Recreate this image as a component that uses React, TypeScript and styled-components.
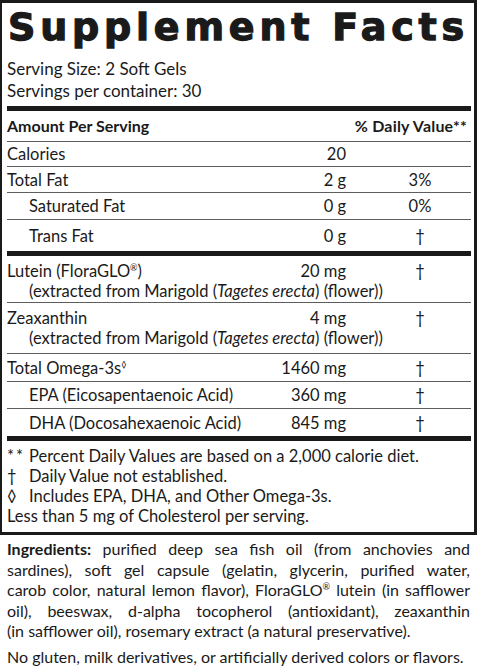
import React from "react";
import styled, { createGlobalStyle } from "styled-components";

const GlobalStyle = createGlobalStyle`
  *, *::before, *::after { box-sizing: border-box; }
  html, body { margin: 0; padding: 0; background: #fff; }
  body { font-family: "Lato", "DejaVu Sans", sans-serif; color: #1a1a1a; }
`;

const Page = styled.div`
  width: 477px;
  height: 672px;
  background: #fff;
  overflow: hidden;
`;

const Panel = styled.section`
  border: 3px solid #1a1a1a;
  border-left-width: 2px;
  padding: 0 3px 3px 5px;
`;

const Title = styled.h1`
  margin: 0;
  height: 55px;
  padding-left: 1px;
  font-family: "DejaVu Sans", sans-serif;
  font-weight: 700;
  font-size: 38px;
  line-height: 48px;
  letter-spacing: 4.8px;
  color: #1a1a1a;
  -webkit-text-stroke: 1.3px #1a1a1a;
  white-space: nowrap;
`;

const Serving = styled.div`
  font-size: 17px;
  line-height: 22px;
`;

const Rule = styled.div<{ $h: number; $gap?: number }>`
  height: ${(p) => p.$h}px;
  margin-top: ${(p) => p.$gap ?? 0}px;
  background: #1a1a1a;
`;

const Row = styled.div<{ $h: number; $last?: boolean; $top?: number }>`
  display: grid;
  grid-template-columns: 239px 100px 124px;
  align-content: ${(p) => (p.$top !== undefined ? "start" : "center")};
  padding-top: ${(p) => p.$top ?? 0}px;
  height: ${(p) => p.$h}px;
  border-bottom: ${(p) => (p.$last ? "none" : "1px solid #5e5e5e")};
  font-size: 16.5px;
  line-height: 20px;
`;

const HeadRow = styled(Row)`
  grid-template-columns: 1fr auto;
  font-weight: 700;
  font-size: 16px;
`;

const Name = styled.div<{ $indent?: boolean }>`
  padding-left: ${(p) => (p.$indent ? 22 : 0)}px;
  white-space: nowrap;
`;

const Amt = styled.div`
  text-align: right;
  white-space: nowrap;
`;

const DV = styled.div`
  padding-left: 24px;
  text-align: center;
`;

const Sub = styled.div`
  grid-column: 1 / -1;
  padding-left: 22px;
  white-space: nowrap;
`;

const Right = styled.div`
  text-align: right;
  padding-right: 4px;
  letter-spacing: 0.2px;
`;

const Mark = styled.sup`
  font-size: 9px;
  line-height: 0;
`;

const Notes = styled.div`
  padding-top: 5px;
  height: 88px;
  font-size: 16.5px;
  line-height: 20px;
`;

const Note = styled.div`
  display: grid;
  grid-template-columns: 22px 1fr;
`;

const Stars = styled.span`
  letter-spacing: 2px;
`;

const Ingredients = styled.div`
  padding: 4px 7px 0 7px;
  font-size: 16px;
  line-height: 20.5px;
  b { font-weight: 700; }
`;

const Line = styled.span<{ $last?: boolean }>`
  display: block;
  text-align: ${(p) => (p.$last ? "left" : "justify")};
  text-align-last: ${(p) => (p.$last ? "left" : "justify")};
  white-space: nowrap;
`;

const Free = styled.p`
  margin: 0;
  padding: 4px 7px 0 7px;
  font-size: 16px;
  line-height: 21px;
  white-space: nowrap;
`;

type Item = { name: React.ReactNode; amt: string; dv: string; indent?: boolean; h: number; last?: boolean };

const upper: Item[] = [
  { name: "Calories", amt: "20", dv: "", h: 25 },
  { name: "Total Fat", amt: "2 g", dv: "3%", h: 26 },
  { name: "Saturated Fat", amt: "0 g", dv: "0%", indent: true, h: 27 },
  { name: "Trans Fat", amt: "0 g", dv: "†", indent: true, h: 31, last: true },
];

const marigold = (
  <>
    (extracted from Marigold (<i>Tagetes erecta</i>) (flower))
  </>
);

export default function App() {
  return (
    <Page>
      <GlobalStyle />
      <Panel>
        <Title>Supplement Facts</Title>
        <Serving>Serving Size: 2 Soft Gels</Serving>
        <Serving>Servings per container: 30</Serving>
        <Rule $h={5} $gap={4} />
        <HeadRow $h={31}>
          <Name>Amount Per Serving</Name>
          <Right>% Daily Value**</Right>
        </HeadRow>
        {upper.map((r, i) => (
          <Row key={i} $h={r.h} $last={r.last}>
            <Name $indent={r.indent}>{r.name}</Name>
            <Amt>{r.amt}</Amt>
            <DV>{r.dv}</DV>
          </Row>
        ))}
        <Rule $h={5} />
        <Row $h={47} $top={5}>
          <Name>
            Lutein (FloraGLO<Mark>®</Mark>)
          </Name>
          <Amt>20 mg</Amt>
          <DV>†</DV>
          <Sub>{marigold}</Sub>
        </Row>
        <Row $h={51} $top={5}>
          <Name>Zeaxanthin</Name>
          <Amt>4 mg</Amt>
          <DV>†</DV>
          <Sub>{marigold}</Sub>
        </Row>
        <Row $h={28}>
          <Name>
            Total Omega-3s<Mark>◊</Mark>
          </Name>
          <Amt>1460 mg</Amt>
          <DV>†</DV>
        </Row>
        <Row $h={27}>
          <Name $indent>EPA (Eicosapentaenoic Acid)</Name>
          <Amt>360 mg</Amt>
          <DV>†</DV>
        </Row>
        <Row $h={27} $last>
          <Name $indent>DHA (Docosahexaenoic Acid)</Name>
          <Amt>845 mg</Amt>
          <DV>†</DV>
        </Row>
        <Rule $h={5} />
        <Notes>
          <Note>
            <Stars>**</Stars>
            <span>Percent Daily Values are based on a 2,000 calorie diet.</span>
          </Note>
          <Note>
            <span>†</span>
            <span>Daily Value not established.</span>
          </Note>
          <Note>
            <span>◊</span>
            <span>Includes EPA, DHA, and Other Omega-3s.</span>
          </Note>
          <div>Less than 5 mg of Cholesterol per serving.</div>
        </Notes>
      </Panel>
      <Ingredients>
        <Line>
          <b>Ingredients:</b> purified deep sea fish oil (from anchovies and
        </Line>
        <Line>sardines), soft gel capsule (gelatin, glycerin, purified water,</Line>
        <Line>
          carob color, natural lemon flavor), FloraGLO<Mark>®</Mark> lutein (in safflower
        </Line>
        <Line>oil), beeswax, d-alpha tocopherol (antioxidant), zeaxanthin</Line>
        <Line $last>(in safflower oil), rosemary extract (a natural preservative).</Line>
      </Ingredients>
      <Free>No gluten, milk derivatives, or artificially derived colors or flavors.</Free>
    </Page>
  );
}
